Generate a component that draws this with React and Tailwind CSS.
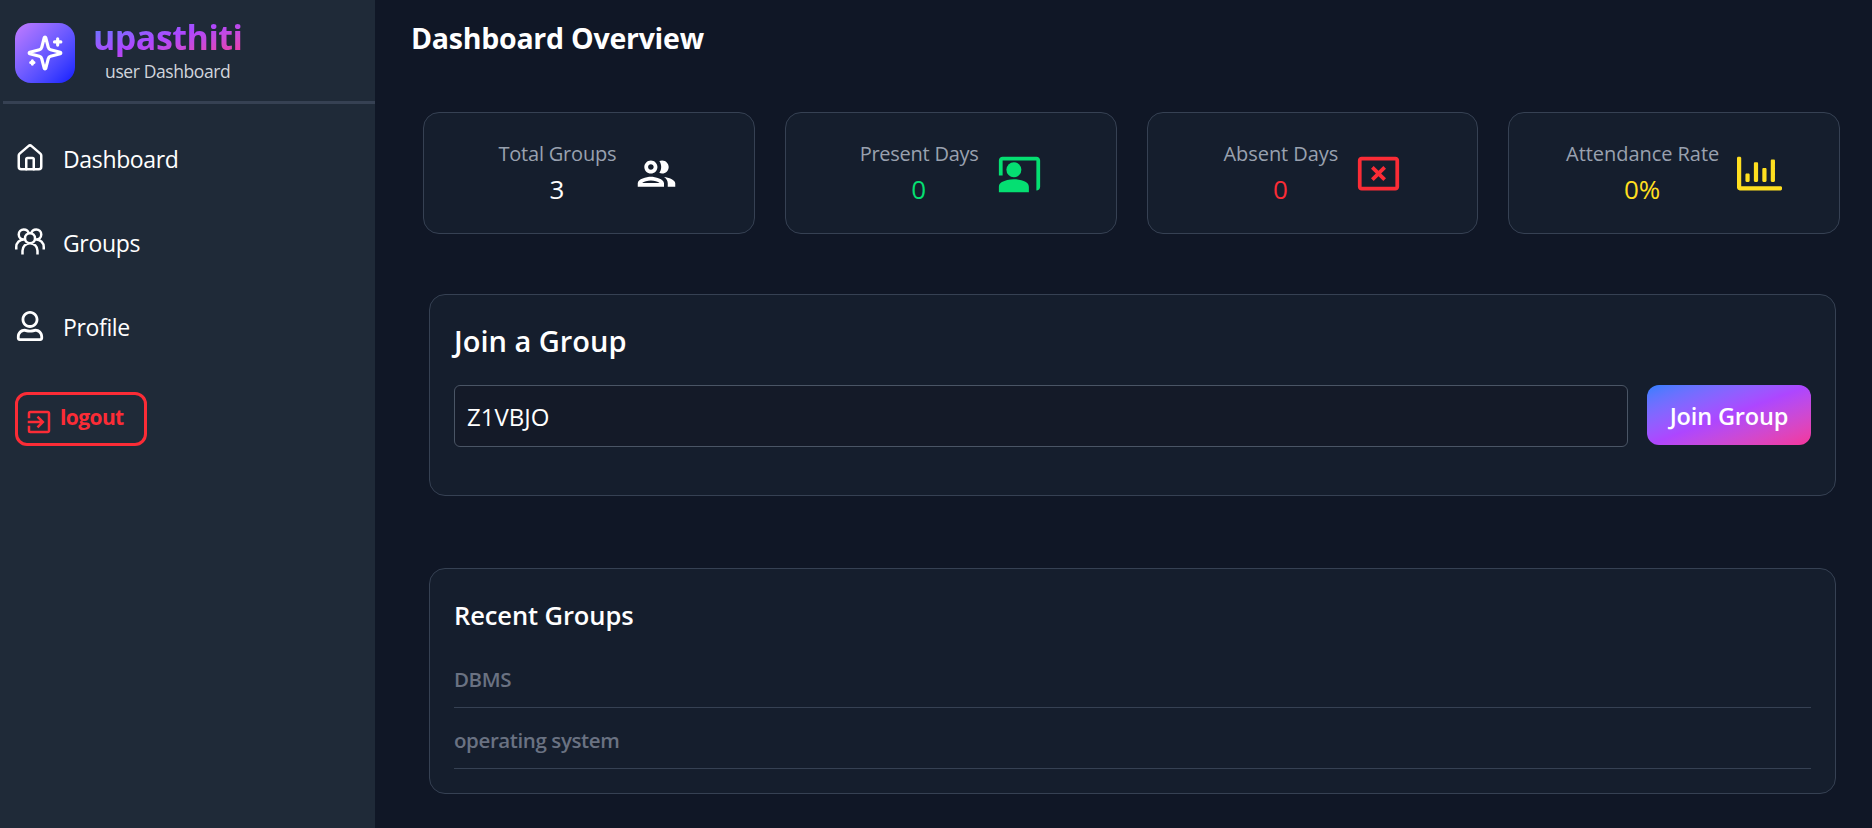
import React from 'react';
import { LuHouse } from 'react-icons/lu';
import { GrGroup } from 'react-icons/gr';
import { FaRegUser, FaRegChartBar } from 'react-icons/fa';
import { MdCoPresent, MdCancelPresentation, MdExitToApp } from 'react-icons/md';

const navItems = [
  { label: 'Dashboard', Icon: LuHouse },
  { label: 'Groups', Icon: GrGroup },
  { label: 'Profile', Icon: FaRegUser },
];

function PeopleIcon({ className }) {
  return (
    <svg viewBox="0 0 24 24" width="45" height="45" fill="currentColor" className={className}>
      <path d="M9 13.75c-2.34 0-7 1.17-7 3.5V19h14v-1.75c0-2.33-4.66-3.5-7-3.5zM4.34 17c.84-.58 2.87-1.25 4.66-1.25s3.82.67 4.66 1.25H4.34zM9 12c1.93 0 3.5-1.57 3.5-3.5S10.93 5 9 5 5.5 6.57 5.5 8.5 7.07 12 9 12zm0-5c.83 0 1.5.67 1.5 1.5S9.83 10 9 10s-1.5-.67-1.5-1.5S8.17 7 9 7zm7.04 6.81c1.16.84 1.96 1.96 1.96 3.44V19h4v-1.75c0-2.02-3.5-3.17-5.96-3.44zM15 12c1.93 0 3.5-1.57 3.5-3.5S16.93 5 15 5c-.54 0-1.04.13-1.5.35.63.89 1 1.98 1 3.15s-.37 2.26-1 3.15c.46.22.96.35 1.5.35z" />
    </svg>
  );
}

const stats = [
  { label: 'Total Groups', value: '3', Icon: PeopleIcon, color: 'text-white', spacing: 'tracking-[-0.2px]' },
  { label: 'Present Days', value: '0', Icon: MdCoPresent, color: 'text-[#05df72]', spacing: 'tracking-[-0.25px]' },
  { label: 'Absent Days', value: '0', Icon: MdCancelPresentation, color: 'text-[#fb2c36]', spacing: 'tracking-[-0.05px]' },
  { label: 'Attendance Rate', value: '0%', Icon: FaRegChartBar, color: 'text-[#ffdf20]', spacing: 'tracking-[-0.05px]' },
];

const recentGroups = ['DBMS', 'operating system'];

function Sparkle() {
  return (
    <svg
      viewBox="0 0 24 24"
      className="h-[38px] w-[38px]"
      fill="none"
      stroke="currentColor"
      strokeWidth="2"
      strokeLinecap="round"
      strokeLinejoin="round"
    >
      <path d="M9.937 15.5A2 2 0 0 0 8.5 14.063l-6.135-1.582a.5.5 0 0 1 0-.962L8.5 9.936A2 2 0 0 0 9.937 8.5l1.582-6.135a.5.5 0 0 1 .963 0L14.063 8.5A2 2 0 0 0 15.5 9.937l6.135 1.581a.5.5 0 0 1 0 .964L15.5 14.063a2 2 0 0 0-1.437 1.437l-1.582 6.135a.5.5 0 0 1-.963 0z" />
      <path d="M20 3v4M22 5h-4M4 17v2M5 18H3" />
    </svg>
  );
}

function Sidebar() {
  return (
    <aside className="w-[375px] shrink-0 bg-[#1f2a38]">
      <header className="ml-[3px] flex h-[104px] border-b-3 border-[#364153] pl-3">
        <div className="mt-[23px] flex h-[60px] w-[60px] items-center justify-center rounded-2xl bg-linear-to-br from-[#c27aff] to-[#1010ff] text-white">
          <Sparkle />
        </div>
        <div className="ml-[18px] pt-[17px] text-center">
          <h1 className="bg-linear-to-br from-[#2b7fff] via-[#ad46ff] to-[#f6339a] bg-clip-text text-[34px] leading-10 font-bold tracking-[-0.5px] text-transparent">
            upasthiti
          </h1>
          <p className="text-[17.5px] leading-7 tracking-[-0.4px] text-[#d1d5dc]">user Dashboard</p>
        </div>
      </header>
      <nav className="flex flex-col pt-3 pl-[15px] text-white">
        {navItems.map(({ label, Icon }) => (
          <a key={label} className="flex h-[84px] items-center gap-[18px]">
            <Icon size={30} />
            <span className="pt-[2px] text-[23px] leading-8 tracking-[-0.35px]">{label}</span>
          </a>
        ))}
      </nav>
      <button className="mt-6 ml-[15px] flex h-[54px] w-[132px] items-start gap-[6px] rounded-xl border-3 border-[#fb2c36] pt-[7px] pl-[6px] text-[#fb2c36]">
        <MdExitToApp size={30} className="mt-[5px]" />
        <span className="text-[21px] leading-[30px] font-bold tracking-[-0.6px]">logout</span>
      </button>
    </aside>
  );
}

function StatCard({ label, value, Icon, color, spacing }) {
  return (
    <div className="flex h-[122px] items-center justify-center gap-[18px] rounded-2xl border border-[#364153] bg-[#151e2d]">
      <div className="flex flex-col items-center gap-[3px] pt-px">
        <span className={`text-xl leading-7 text-[#99a1af] ${spacing}`}>{label}</span>
        <span className={`pr-px text-[26px] leading-9 ${color}`}>{value}</span>
      </div>
      <Icon size={45} className={color} />
    </div>
  );
}

export default function App() {
  return (
    <div className="flex h-[828px] w-[1872px] overflow-hidden bg-[#101726] font-['Open_Sans',sans-serif]">
      <Sidebar />
      <main className="flex-1 pt-[18px]">
        <h2 className="pl-9 text-[28.5px] leading-10 font-bold tracking-[-0.25px] text-white">Dashboard Overview</h2>

        <section className="mt-[54px] mr-8 ml-12 grid grid-cols-4 gap-[30px]">
          {stats.map((s) => (
            <StatCard key={s.label} {...s} />
          ))}
        </section>

        <section className="mt-[60px] mr-9 ml-[54px] h-[202px] rounded-2xl border border-[#364153] bg-[#151e2d] px-6 pt-[26px]">
          <h3 className="text-[29px] leading-10 font-semibold text-white">Join a Group</h3>
          <div className="mt-6 flex gap-[19px]">
            <input
              defaultValue="Z1VBJO"
              className="h-[62px] min-w-0 flex-1 rounded-md border border-[#4a5565] bg-[#141a28] px-3 text-2xl text-white outline-none"
            />
            <button className="h-[60px] w-[164px] rounded-xl bg-linear-to-br from-[#2b7fff] via-[#ad46ff] to-[#f6339a] pt-[3px] text-[23.5px] font-semibold tracking-[-0.15px] text-white">
              Join Group
            </button>
          </div>
        </section>

        <section className="mt-[72px] mr-9 ml-[54px] h-[226px] rounded-2xl border border-[#364153] bg-[#151e2d] px-6 pt-7">
          <h3 className="text-[25.5px] leading-9 font-semibold tracking-[-0.1px] text-white">Recent Groups</h3>
          <ul className="mt-[14px]">
            {recentGroups.map((g) => (
              <li
                key={g}
                className="border-b border-[#364153] pt-[17px] pb-[13px] text-[20.5px] leading-[30px] font-semibold tracking-[-0.4px] text-[#6a7282]"
              >
                {g}
              </li>
            ))}
          </ul>
        </section>
      </main>
    </div>
  );
}
